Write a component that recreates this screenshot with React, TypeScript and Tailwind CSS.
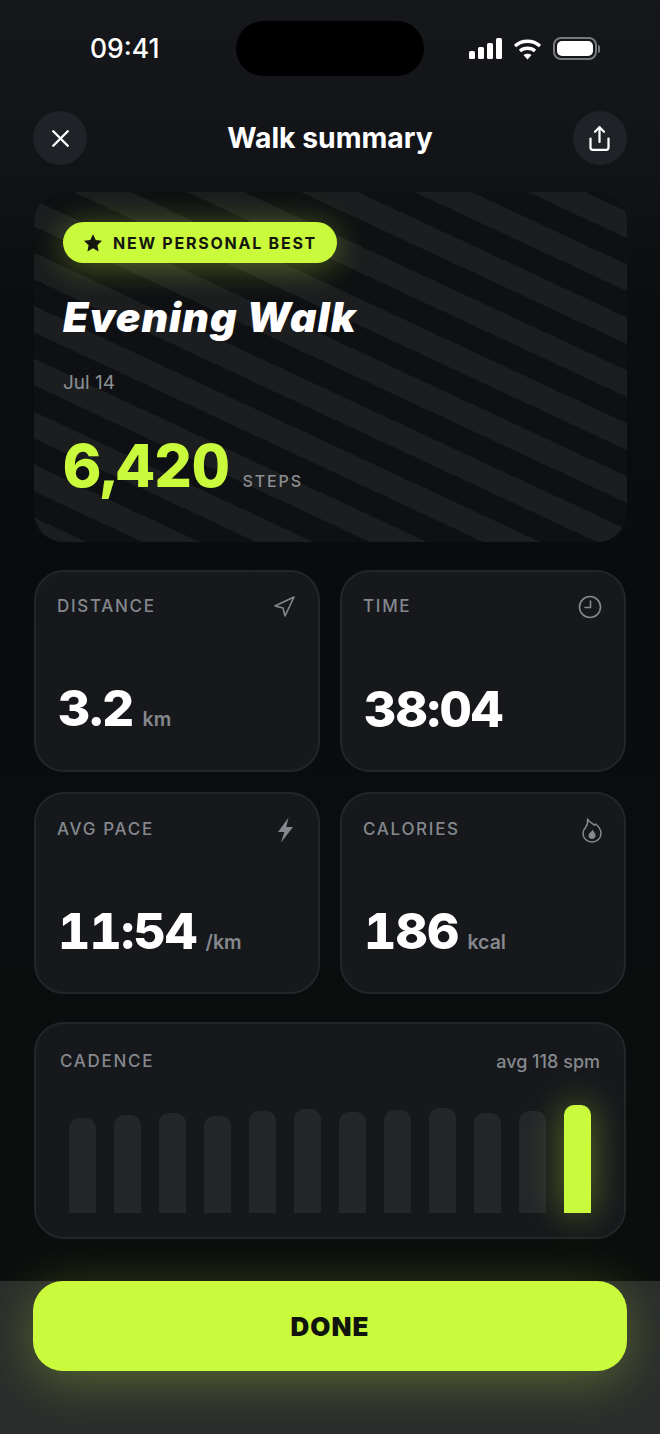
import { Navigation, Share, X } from "lucide-react";
import type { ReactNode } from "react";

const bars = [95, 98, 100, 97, 102, 104, 101, 103, 105, 100, 102];

function ClockIcon() {
  return (
    <svg width="24" height="24" viewBox="0 0 24 24" fill="none" stroke="currentColor" strokeWidth="1.600" strokeLinecap="round">
      <circle cx="12" cy="12" r="10.500" />
      <path d="M12.500 6v6.500H7" />
    </svg>
  );
}

function BoltIcon() {
  return (
    <svg width="19" height="26" viewBox="0 0 19 26" fill="currentColor">
      <path d="M11.500 .5 1 15h6.300L4 25.500 16 10H9.300Z" />
    </svg>
  );
}

function FlameIcon() {
  return (
    <svg width="20" height="25" viewBox="0 0 20 25" fill="none" stroke="currentColor" strokeWidth="1.500" strokeLinejoin="round">
      <path d="M5.500 1c1.200 2.400 3.500 3.600 6.200 5.600.8.600 1.200.8 1.800-.6 3 2.300 5.500 5.600 5.500 9.500 0 4.800-4 8.500-9 8.500s-9-3.700-9-8.500c0-3 1.500-5 3-6.800C5.500 6.500 6 4 5.500 1Z" />
      <path d="M10.500 11.500c.4 1.800 3 2.800 3 6 0 2.200-1.600 3.500-3.500 3.500s-3.500-1.300-3.500-3.500c0-2.500 3-3.300 4-6Z" fill="currentColor" stroke="none" />
    </svg>
  );
}

function Card({ label, icon, value, unit, lowerRow }: { label: string; icon: ReactNode; value: string; unit?: string; lowerRow?: boolean }) {
  return (
    <div className={"flex h-[202px] flex-col justify-between rounded-[30px] border-2 border-[#232529] bg-[#16181c] pr-[22px] pl-[21px] " + (lowerRow ? "pt-[24px] pb-[35px]" : "pt-[23px] pb-[36px]")}>
      <div className="flex h-[24px] items-center justify-between text-[#85888d]">
        <span className="text-[17px] font-medium tracking-[0.1em]">{label}</span>
        {icon}
      </div>
      <div className="flex items-baseline gap-[9px] pl-[1px]">
        <span className="text-[50px] leading-[50px] font-extrabold tracking-[-0.016em] text-white tabular-nums">{value}</span>
        {unit ? <span className="text-[19.500px] font-semibold text-[#85888d]">{unit}</span> : null}
      </div>
    </div>
  );
}

export default function App() {
  return (
    <div className="flex h-[1434px] w-[660px] flex-col overflow-hidden bg-[linear-gradient(180deg,#15171b_0,#121418_150px,#0c0d0f_300px,#0a0b0d_600px,#0c0e0e_1280px)] font-['Inter',sans-serif]">
      <div className="mt-[21px] flex h-[55px] shrink-0 items-center pr-[60px] pl-[90px]">
        <span className="w-[72px] text-[26.500px] leading-none font-medium text-white">09:41</span>
        <div className="ml-[74px] h-[55px] w-[188px] rounded-full bg-black" />
        <div className="ml-auto flex items-center gap-[11px]">
          <svg width="33" height="21" viewBox="0 0 33 21" fill="white">
            <rect x="0" y="13" width="6" height="8" rx="1.500" />
            <rect x="9" y="9" width="6" height="12" rx="1.500" />
            <rect x="18" y="5" width="6" height="16" rx="1.500" />
            <rect x="27" y="0" width="6" height="21" rx="1.500" />
          </svg>
          <svg width="29" height="22" viewBox="0 0 29 22" fill="none" stroke="white" strokeWidth="3.400">
            <path d="M2 8c7-6.400 18-6.400 25 0" />
            <path d="M7 13c4-3.600 11-3.600 15 0" />
            <path d="M14.500 21.500l-4-4.400c2.300-1.700 5.700-1.700 8 0Z" fill="white" stroke="none" />
          </svg>
          <div className="flex items-center gap-[1px]">
            <div className="h-[23px] w-[44px] rounded-[8px] border-2 border-[#77797b] p-[2px]">
              <div className="h-full w-full rounded-[5px] bg-white" />
            </div>
            <div className="h-[8px] w-[2px] rounded-r-full bg-[#77797b]" />
          </div>
        </div>
      </div>

      <div className="mt-[35px] flex h-[54px] shrink-0 items-center justify-between px-[33px]">
        <button className="flex h-[54px] w-[54px] items-center justify-center rounded-full bg-[#1f2226] text-white">
          <X size={29} strokeWidth={2} />
        </button>
        <h1 className="text-[28.300px] leading-none font-bold text-white">Walk summary</h1>
        <button className="flex h-[54px] w-[54px] items-center justify-center rounded-full bg-[#1f2226] text-white">
          <Share size={27} strokeWidth={2} />
        </button>
      </div>

      <section className="mt-[27px] ml-[34px] flex h-[350px] w-[593px] shrink-0 flex-col items-start rounded-[30px] bg-[repeating-linear-gradient(25deg,#1b1d1f_0,#1b1d1f_22px,#0e1013_22px,#0e1013_46px,#1b1d1f_46px,#1b1d1f_48px)] pt-[30px] pl-[29px]">
        <div className="flex h-[41px] w-[274px] items-center gap-[10px] rounded-full bg-[#c9fa3b] pl-[20px] shadow-[0_4px_34px_rgba(204,252,60,0.35)]">
          <svg width="20" height="20" viewBox="0 0 24 24" fill="#14160f">
            <path d="M12 1.500l3.300 6.900 7.500 1-5.500 5.200 1.400 7.500L12 18.400l-6.700 3.700 1.400-7.500L1.200 9.400l7.500-1Z" />
          </svg>
          <span className="text-[16px] leading-none font-bold tracking-[0.11em] text-[#14160f]">NEW PERSONAL BEST</span>
        </div>
        <h2 className="mt-[25px] text-[41px] leading-[58px] font-black tracking-[0.025em] text-white italic">Evening Walk</h2>
        <p className="mt-[24px] text-[19px] leading-[26px] text-[#8c8f93]">Jul 14</p>
        <div className="mt-[34px] flex items-baseline gap-[13px]">
          <span className="text-[59px] leading-[72px] font-extrabold tracking-[-0.006em] text-[#c9fa3b] tabular-nums">6,420</span>
          <span className="text-[16px] font-medium tracking-[0.12em] text-[#8c8f93]">STEPS</span>
        </div>
      </section>

      <div className="mt-[28px] ml-[34px] grid w-[592px] shrink-0 grid-cols-2 gap-x-[20px] gap-y-[20px]">
        <Card label="DISTANCE" value="3.2" unit="km" icon={<Navigation size={24} strokeWidth={1.600} />} />
        <Card label="TIME" value="38:04" icon={<ClockIcon />} />
        <Card label="AVG PACE" value="11:54" unit="/km" lowerRow icon={<BoltIcon />} />
        <Card label="CALORIES" value="186" unit="kcal" lowerRow icon={<FlameIcon />} />
      </div>

      <section className="mt-[28px] ml-[34px] flex h-[217px] w-[592px] shrink-0 flex-col justify-between rounded-[30px] border-2 border-[#232529] bg-[#16181c] pt-[25px] pr-[24px] pb-[24px] pl-[24px]">
        <div className="flex items-center justify-between text-[#85888d]">
          <span className="text-[17px] font-medium tracking-[0.1em]">CADENCE</span>
          <span className="text-[18px] leading-[24px] font-medium">avg 118 spm</span>
        </div>
        <div className="flex items-end justify-between px-[9px]">
          {bars.map((h, i) => (
            <div key={i} className="w-[27px] rounded-t-[10px] bg-[#24272a]" style={{ height: h }} />
          ))}
          <div className="h-[108px] w-[27px] rounded-t-[10px] bg-[#c9fa3b] shadow-[0_0_36px_rgba(204,252,60,0.42)]" />
        </div>
      </section>

      <div className="mt-[42px] flex-1 bg-[#2a2d2c] px-[33px]">
        <button className="flex h-[90px] w-full items-center justify-center rounded-[30px] bg-[#c9fa3b] text-[26px] font-black tracking-[0.04em] text-[#11130d] shadow-[0_10px_50px_rgba(204,252,60,0.28)]">
          DONE
        </button>
      </div>
    </div>
  );
}
